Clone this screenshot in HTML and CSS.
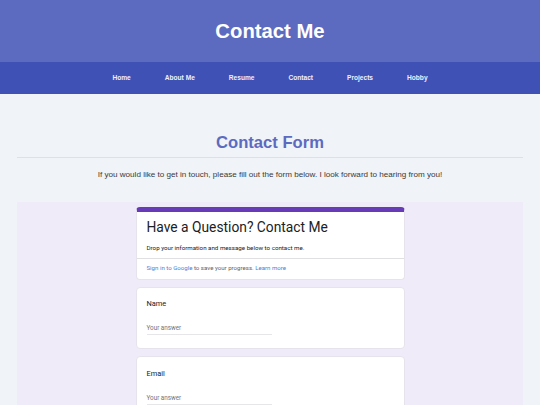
FILE: index.html
```html
<!DOCTYPE html>
<html lang="en">
<head>
<meta charset="utf-8">
<title>Contact Me</title>
<link rel="stylesheet" href="styles.css">
</head>
<body>
<header class="site-header">
  <h1 class="site-title">Contact Me</h1>
</header>
<nav class="site-nav">
  <ul class="nav-list">
    <li><a href="#">Home</a></li>
    <li><a href="#">About Me</a></li>
    <li><a href="#">Resume</a></li>
    <li><a href="#">Contact</a></li>
    <li><a href="#">Projects</a></li>
    <li><a href="#">Hobby</a></li>
  </ul>
</nav>
<main class="content">
  <h2 class="section-title">Contact Form</h2>
  <p class="intro">If you would like to get in touch, please fill out the form below. I look forward to hearing from you!</p>
  <section class="form-frame">
    <div class="form-col">
      <div class="card card-head">
        <div class="head-main">
          <div class="form-title">Have a Question? Contact Me</div>
          <div class="form-desc">Drop your information and message below to contact me.</div>
        </div>
        <div class="head-sign"><a class="g-link" href="#">Sign in to Google</a> to save your progress. <a class="g-link" href="#">Learn more</a></div>
      </div>
      <div class="card question">
        <div class="q-label">Name</div>
        <div class="q-input">Your answer</div>
      </div>
      <div class="card question">
        <div class="q-label">Email</div>
        <div class="q-input">Your answer</div>
      </div>
    </div>
  </section>
</main>
</body>
</html>
```
FILE: styles.css
```css
html, body {
  margin: 0;
  padding: 0;
  height: 100%;
  overflow: hidden;
}
body {
  background: #f0f3f7;
  font-family: "Liberation Sans", Arial, sans-serif;
  color: #333;
}
.site-header {
  height: 62px;
  background: #5c6bc0;
  display: flex;
  align-items: center;
  justify-content: center;
}
.site-title {
  margin: 0;
  color: #fff;
  font-size: 20.3px;
  line-height: 24px;
  font-weight: bold;
}
.site-nav {
  height: 32px;
  background: #3f51b5;
  display: flex;
  align-items: center;
  justify-content: center;
}
.nav-list {
  list-style: none;
  margin: 0;
  padding: 0;
  display: flex;
  gap: 34px;
}
.nav-list a {
  color: #eef0fb;
  text-decoration: none;
  font-size: 6.6px;
  font-weight: bold;
  line-height: 8px;
  display: block;
}
.content {
  margin: 0 17px;
}
.section-title {
  margin: 38.5px 0 0;
  padding-bottom: 4px;
  border-bottom: 1px solid #dde1e7;
  text-align: center;
  color: #5c6bc0;
  font-size: 16.6px;
  line-height: 20px;
  font-weight: bold;
}
.intro {
  margin: 12.5px 0 0;
  text-align: center;
  font-size: 8.1px;
  line-height: 10px;
  color: #3a3a3a;
}
.form-frame {
  margin-top: 21.5px;
  background: #efebf8;
  padding-top: 5px;
  height: 300px;
}
.form-col {
  width: 269px;
  margin: 0 auto;
  display: flex;
  flex-direction: column;
  gap: 7px;
  font-family: Roboto, "Liberation Sans", Arial, sans-serif;
}
.card {
  background: #fff;
  border-radius: 4px;
  border: 1px solid #e6e3ec;
  box-sizing: border-box;
}
.card-head {
  border-top: 5px solid #673ab7;
  border-radius: 4px;
}
.head-main {
  padding: 7.5px 10px 6px;
  border-bottom: 1px solid #e0e0e3;
}
.form-title {
  font-size: 13.8px;
  line-height: 17px;
  color: #202124;
}
.form-desc {
  margin-top: 8px;
  font-size: 6.2px;
  line-height: 8px;
  color: #202124;
}
.head-sign {
  padding: 5px 10px 6.5px;
  font-size: 6.1px;
  line-height: 8px;
  color: #5f6368;
}
.g-link {
  color: #4a7fd9;
  text-decoration: none;
}
.question {
  padding: 11.5px 10px 13px;
}
.q-label {
  font-size: 7.4px;
  line-height: 9px;
  color: #202124;
}
.q-input {
  margin-top: 16px;
  width: 125px;
  padding-bottom: 2px;
  border-bottom: 1px solid #e6e6e9;
  font-size: 6.3px;
  line-height: 8px;
  color: #70757a;
}
```
